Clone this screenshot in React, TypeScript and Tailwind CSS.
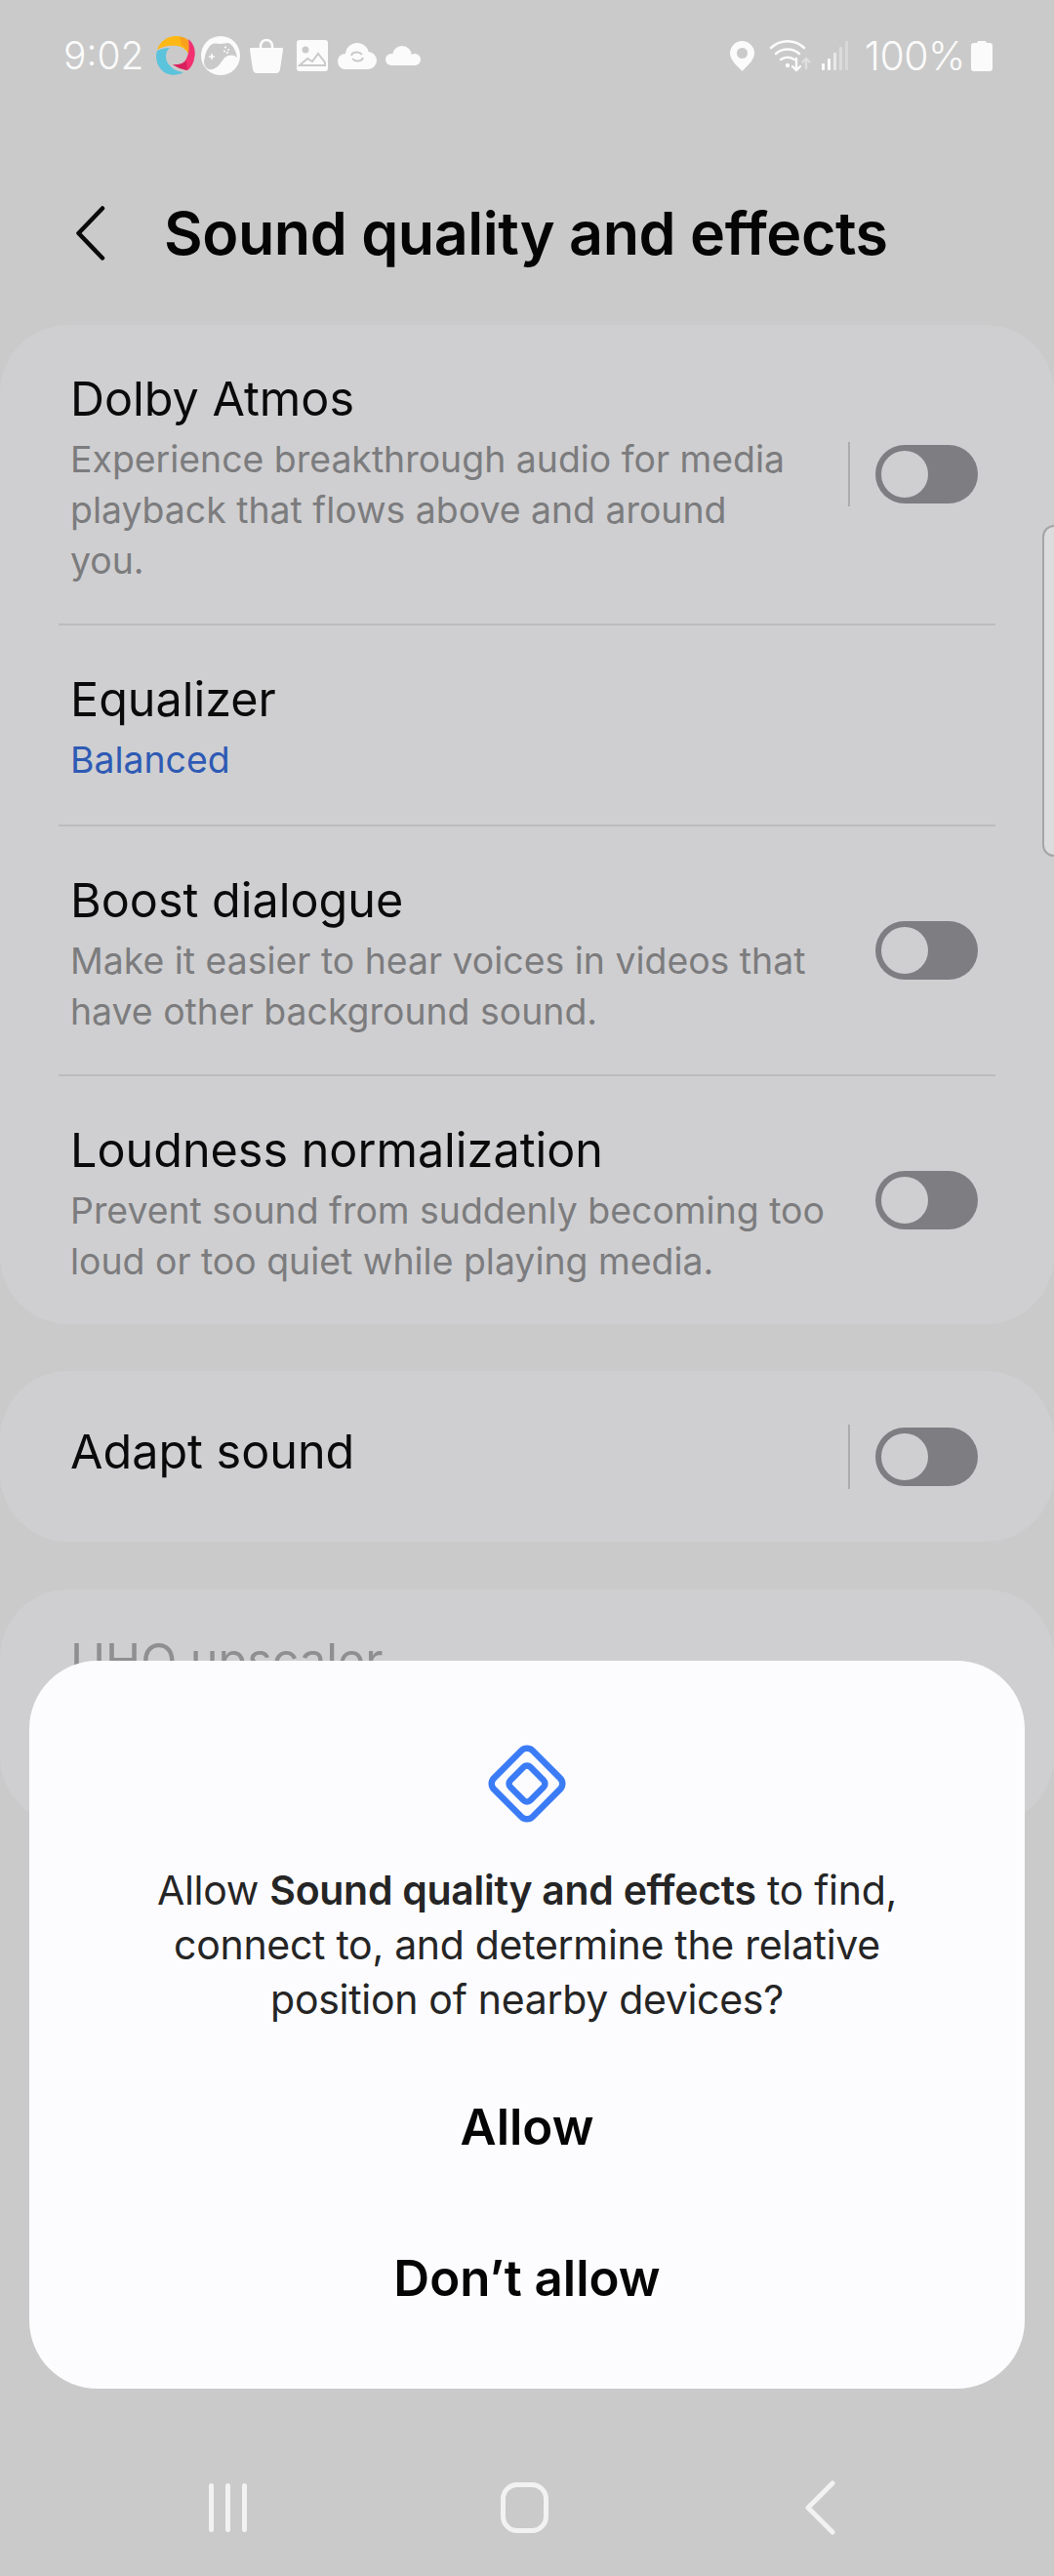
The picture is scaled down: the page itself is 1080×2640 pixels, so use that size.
import type { ReactNode } from "react";

const font = "font-['Inter','Noto_Sans',sans-serif]";

function Toggle() {
  return (
    <div className="w-[105px] h-[60px] shrink-0 rounded-full bg-[#7e7e82] p-[6px]">
      <div className="w-[48px] h-[48px] rounded-full bg-[#cfcfd1]" />
    </div>
  );
}

function Divider() {
  return <div className="mx-[60px] h-[2px] bg-[#bcbcbe]" />;
}

interface RowProps {
  title: string;
  children?: ReactNode;
  toggle?: boolean;
  split?: boolean;
}

function Row({ title, children, toggle, split }: RowProps) {
  return (
    <div className="flex items-center pl-[72px] pr-[78px]">
      <div className="flex-1 min-w-0 pt-[45px] pb-[38px]">
        <div className="text-[48.5px] leading-[62px] text-[#0a0a0a]">{title}</div>
        {children}
      </div>
      {split && <div className="w-[2px] h-[66px] bg-[#acacae] mr-[26px]" />}
      {toggle && <Toggle />}
    </div>
  );
}

function Sub({ children }: { children: ReactNode }) {
  return <div className="mt-[5px] text-[37.4px] leading-[52px] text-[#7c7c7e]">{children}</div>;
}

function StatusLeft() {
  return (
    <div className="flex items-center">
      <span className="text-[39px] leading-[46px] font-light text-[#fbfbfb] w-[95px]">9:02</span>
      {/* app logo */}
      <svg width="40" height="40" viewBox="0 0 40 40" className="mr-[6px]">
        <path d="M1 14C4 5 12 0 20 0c6 0 11 2 13 5 1 4 1 9 0 13-2-4-6-7-11-8-8-1-15 0-21 4z" fill="#fdb813" />
        <path d="M24 1c5 0 8 2 9 4 1 4 1 9 0 13-1-5-4-7-7-9z" fill="#f9a11b" />
        <path d="M33 3c6 5 8 12 6 20-1 6-4 10-7 12-6-1-11-3-15-6 6 1 12-1 14-6 3-6 3-13 2-20z" fill="#f2306f" />
        <path d="M17 29c5 1 11 0 14-4l1 10c-6-1-11-3-15-6z" fill="#d8215c" />
        <path d="M1 15c4-2 9-3 13-3-4 3-5 9-3 14 3 6 9 10 17 11-5 3-12 4-18 1C2 34-2 23 1 15z" fill="#5cc3dc" />
      </svg>
      {/* games */}
      <svg width="40" height="40" viewBox="0 0 40 40" className="mr-[10px]">
        <circle cx="20" cy="20" r="20" fill="#fbfbfb" />
        <path d="M3 26C4 18 7 10 12 8c3-1 5 0 8 0s5-1 8-1c4 1 8 8 9 15-3-3-6-3-9-2-4 1-6 5-9 9-3 4-8 6-11 5-3-1-5-4-5-8z" fill="#cacaca" />
        <path d="M8 21h6M11 18v6" stroke="#fbfbfb" strokeWidth="1.600" />
        <circle cx="25" cy="11.500" r="1.100" fill="#fbfbfb" />
        <circle cx="28" cy="14" r="1.100" fill="#fbfbfb" />
        <circle cx="24" cy="15.500" r="1.100" fill="#fbfbfb" />
        <circle cx="27" cy="17" r="1.100" fill="#fbfbfb" />
      </svg>
      {/* store bag */}
      <svg width="34" height="36" viewBox="0 0 34 36" className="mr-[14px]">
        <path d="M11 10V8a6 6 0 0 1 12 0v2" fill="none" stroke="#fbfbfb" strokeWidth="2.500" />
        <path d="M1 10h32c1 0 1 1 1 2l-3 20c0 2-2 4-4 4H7c-2 0-4-2-4-4L0 12c0-1 0-2 1-2z" fill="#fbfbfb" />
      </svg>
      {/* gallery */}
      <svg width="32" height="32" viewBox="0 0 32 32" className="mr-[10px]">
        <rect width="32" height="32" rx="3" fill="#fbfbfb" />
        <circle cx="9" cy="10" r="3.500" fill="#cacaca" />
        <path d="M3 26l8-7 5 3 6-8 7 9v3H3z" fill="none" stroke="#cacaca" strokeWidth="2" />
      </svg>
      {/* cloud sync */}
      <svg width="40" height="27" viewBox="0 0 40 27" className="mr-[9px]">
        <circle cx="8" cy="19" r="8" fill="#fbfbfb" />
        <circle cx="20" cy="12" r="12" fill="#fbfbfb" />
        <circle cx="31" cy="18" r="9" fill="#fbfbfb" />
        <rect x="8" y="15" width="23" height="12" fill="#fbfbfb" />
        <path d="M14 13c1-4 8-5 11-1M26 15c-1 4-8 5-11 1" fill="none" stroke="#cacaca" strokeWidth="2" />
      </svg>
      {/* cloud */}
      <svg width="36" height="20" viewBox="0 0 36 20">
        <circle cx="6" cy="14" r="6" fill="#fbfbfb" />
        <circle cx="17" cy="10" r="10" fill="#fbfbfb" />
        <circle cx="30" cy="14" r="6" fill="#fbfbfb" />
        <rect x="6" y="12" width="24" height="8" fill="#fbfbfb" />
      </svg>
    </div>
  );
}

function StatusRight() {
  return (
    <div className="flex items-center">
      <svg width="25" height="31" viewBox="0 0 25 31" className="mr-[15px]">
        <path fillRule="evenodd" d="M12.500 0A12.500 12.500 0 0 0 0 12.500C0 20 8 26 12.500 31 17 26 25 20 25 12.500A12.500 12.500 0 0 0 12.500 0zm0 7a5.500 5.500 0 1 1 0 11 5.500 5.500 0 0 1 0-11z" fill="#fbfbfb" />
      </svg>
      <svg width="45" height="34" viewBox="0 0 45 34" className="mr-[9px]" fill="none" strokeLinecap="round">
        <path d="M2 9c10-9 24-9 34 0M7 15c7-6 17-6 24 0M12 21c4-3 10-3 14 0" stroke="#fbfbfb" strokeWidth="2.600" />
        <circle cx="19" cy="27" r="2.200" fill="#fbfbfb" />
        <path d="M28 20v12M24 28l4 4 4-4" stroke="#fbfbfb" strokeWidth="2.400" />
        <path d="M38 30V20M34.500 23.500l3.500-3.500 3.500 3.500" stroke="#dfdfdf" strokeWidth="2.400" />
      </svg>
      <svg width="27" height="30" viewBox="0 0 27 30" className="mr-[17px]">
        <rect x="0" y="23" width="3" height="7" rx="1" fill="#fbfbfb" />
        <rect x="6" y="18" width="3" height="12" rx="1" fill="#fbfbfb" />
        <rect x="12" y="12" width="3" height="18" rx="1" fill="#e8e8e8" />
        <rect x="18" y="6" width="3" height="24" rx="1" fill="#dcdcdc" />
        <rect x="24" y="0" width="3" height="30" rx="1" fill="#d8d8d8" />
      </svg>
      <span className="text-[41px] leading-[46px] font-light text-[#fbfbfb] tracking-[-0.5px] mr-[6px]">100%</span>
      <svg width="22" height="31" viewBox="0 0 22 31">
        <path d="M6 2c0-1 1-2 2-2h6c1 0 2 1 2 2h3c2 0 3 1 3 3v23c0 2-1 3-3 3H3c-2 0-3-1-3-3V5c0-2 1-3 3-3z" fill="#fbfbfb" />
      </svg>
    </div>
  );
}

export default function App() {
  return (
    <div className={`relative w-[1080px] h-[2640px] overflow-hidden bg-[#cacaca] flex flex-col ${font}`}>
      <div className="flex items-center justify-between pl-[65px] pr-[63px] pt-[34px] h-[80px]">
        <StatusLeft />
        <StatusRight />
      </div>

      {/* Header */}
      <div className="flex items-center h-[173px] mt-[72px] pl-[78px]">
        <svg width="30" height="56" viewBox="0 0 30 56" fill="none" className="mr-[60px]">
          <path d="M27 2.500L2.500 28 27 53.500" stroke="#0a0a0a" strokeWidth="4.500" strokeLinecap="round" strokeLinejoin="round" />
        </svg>
        <h1 className="text-[61px] leading-[70px] font-semibold text-[#050505] tracking-[-0.45px]">Sound quality and effects</h1>
      </div>

      {/* Settings cards */}
      <div className="rounded-[70px] bg-[#cfcfd1] mt-[8px] w-full">
        <Row title="Dolby Atmos" toggle split>
          <Sub>
            Experience breakthrough audio for media
            <br />
            playback that flows above and around
            <br />
            you.
          </Sub>
        </Row>
        <Divider />
        <Row title="Equalizer">
          <div className="mt-[5px] mb-[2px] text-[37.4px] leading-[52px] text-[#2e5ab4]">Balanced</div>
        </Row>
        <Divider />
        <Row title="Boost dialogue" toggle>
          <Sub>
            Make it easier to hear voices in videos that
            <br />
            have other background sound.
          </Sub>
        </Row>
        <Divider />
        <Row title="Loudness normalization" toggle>
          <Sub>
            Prevent sound from suddenly becoming too
            <br />
            loud or too quiet while playing media.
          </Sub>
        </Row>
      </div>

      <div className="rounded-[70px] bg-[#cfcfd1] mt-[48px] h-[175px] flex items-center pl-[72px] pr-[78px]">
        <div className="flex-1 text-[48.5px] leading-[62px] text-[#0a0a0a] -mt-[9px]">Adapt sound</div>
        <div className="w-[2px] h-[66px] bg-[#acacae] mr-[26px]" />
        <Toggle />
      </div>

      <div className="rounded-[70px] bg-[#cfcfd1] mt-[49px] h-[241px] pl-[72px] pt-[42px]">
        <div className="text-[48.5px] leading-[62px] text-[#8f8f91]">UHQ upscaler</div>
      </div>

      {/* Nav bar */}
      <div className="mt-auto h-[114px] relative flex items-start justify-center">
        <div className="flex items-center gap-[12px] absolute left-[214px] top-[19px]">
          <div className="w-[5px] h-[50px] rounded-full bg-[#f2f2f2]" />
          <div className="w-[5px] h-[50px] rounded-full bg-[#f2f2f2]" />
          <div className="w-[5px] h-[50px] rounded-full bg-[#f2f2f2]" />
        </div>
        <div className="absolute left-[513px] top-[18px] w-[49px] h-[52px] rounded-[17px] border-[5px] border-[#f2f2f2]" />
        <svg width="32" height="56" viewBox="0 0 32 56" fill="none" className="absolute left-[824px] top-[16px]">
          <path d="M29 3L4 28l25 25" stroke="#f2f2f2" strokeWidth="5" strokeLinecap="round" strokeLinejoin="round" />
        </svg>
      </div>

      {/* Edge panel handle */}
      <div className="absolute left-[1068px] top-[538px] w-[12px] h-[340px] rounded-l-[12px] bg-[#dcdcde] border-2 border-r-0 border-[#a5a5a7]" />

      {/* Permission dialog */}
      <div className="absolute left-[30px] top-[1702px] w-[1020px] h-[746px] rounded-[70px] bg-[#fcfcff] flex flex-col items-center pt-[86px]">
        <svg width="80" height="80" viewBox="0 0 80 80" fill="none" stroke="#3b7cf6" strokeWidth="6.500" className="shrink-0">
          <rect x="12" y="12" width="56" height="56" rx="8" transform="rotate(45 40 40)" />
          <rect x="25.500" y="25.500" width="29" height="29" rx="5" transform="rotate(45 40 40)" />
        </svg>
        <p className="mt-[41px] text-center text-[41px] leading-[56px] text-[#252525] tracking-[-0.3px]">
          Allow <b className="font-semibold">Sound quality and effects</b> to find,
          <br />
          connect to, and determine the relative
          <br />
          position of nearby devices?
        </p>
        <button className="mt-[26px] h-[155px] shrink-0 text-[51px] font-semibold text-[#050505]">Allow</button>
        <button className="h-[155px] shrink-0 text-[51px] font-semibold text-[#050505]">Don’t allow</button>
      </div>
    </div>
  );
}
